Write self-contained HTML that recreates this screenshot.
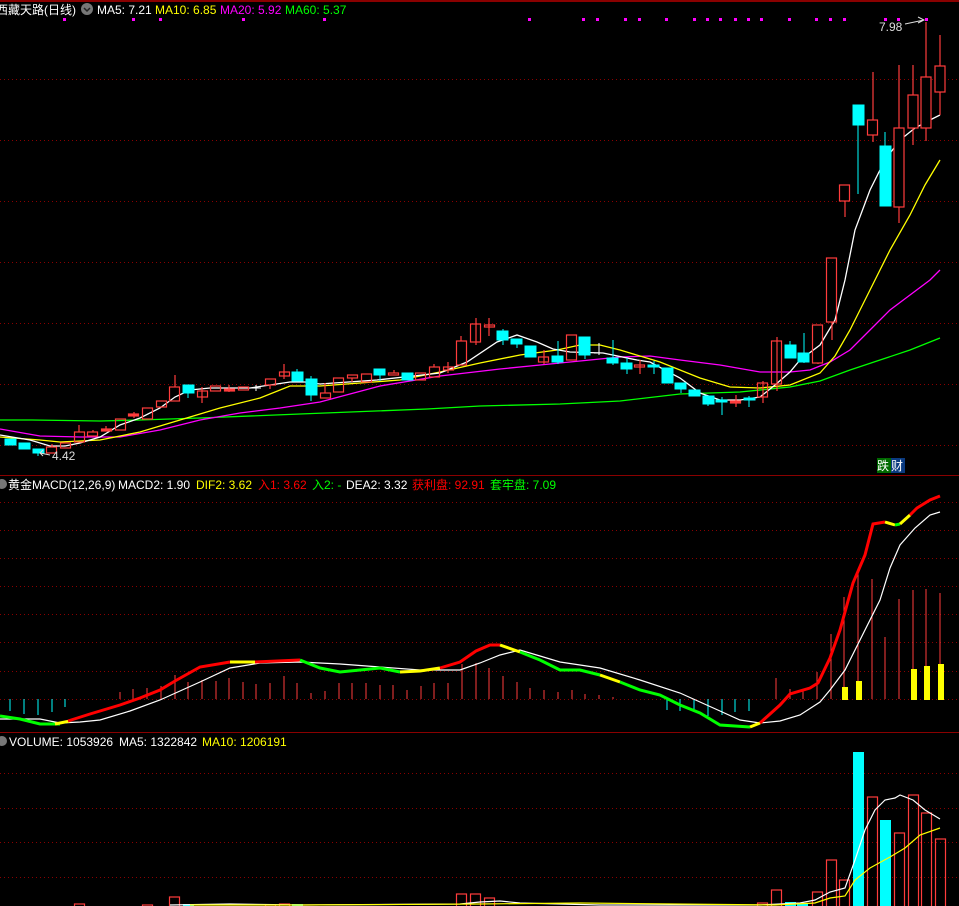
<!DOCTYPE html>
<html><head><meta charset="utf-8"><style>
html,body{margin:0;padding:0;background:#000;width:959px;height:906px;overflow:hidden}
svg{display:block}
text{font-family:"Liberation Sans","Noto Sans CJK SC",sans-serif;font-size:12px}
</style></head><body>
<svg width="959" height="906" viewBox="0 0 959 906" xmlns="http://www.w3.org/2000/svg">
<rect width="959" height="906" fill="#000"/>
<!-- separators -->
<line x1="0" y1="1" x2="959" y2="1" stroke="#8a0000" stroke-width="2"/>
<line x1="0" y1="475.5" x2="959" y2="475.5" stroke="#8a0000"/>
<line x1="0" y1="732.5" x2="959" y2="732.5" stroke="#8a0000"/>
<!-- grid -->
<g stroke="#8a0000" stroke-dasharray="1,3">
<line x1="0" y1="79.5" x2="959" y2="79.5"/><line x1="0" y1="140.5" x2="959" y2="140.5"/>
<line x1="0" y1="201.5" x2="959" y2="201.5"/><line x1="0" y1="262.5" x2="959" y2="262.5"/>
<line x1="0" y1="323.5" x2="959" y2="323.5"/><line x1="0" y1="384.5" x2="959" y2="384.5"/>
<line x1="0" y1="445.5" x2="959" y2="445.5"/>
<line x1="0" y1="502.5" x2="959" y2="502.5"/><line x1="0" y1="530.5" x2="959" y2="530.5"/>
<line x1="0" y1="558.5" x2="959" y2="558.5"/><line x1="0" y1="586.5" x2="959" y2="586.5"/>
<line x1="0" y1="614.5" x2="959" y2="614.5"/><line x1="0" y1="642.5" x2="959" y2="642.5"/>
<line x1="0" y1="671.5" x2="959" y2="671.5"/><line x1="0" y1="699.5" x2="959" y2="699.5"/>
<line x1="0" y1="773.5" x2="959" y2="773.5"/><line x1="0" y1="808.5" x2="959" y2="808.5"/>
<line x1="0" y1="842.5" x2="959" y2="842.5"/><line x1="0" y1="877.5" x2="959" y2="877.5"/>
</g>
<!-- header -->
<text x="-4" y="14" fill="#fff">西藏天路(日线)</text>
<circle cx="87" cy="9" r="6" fill="#777"/><path d="M84 8l3 3 3-3" stroke="#222" fill="none" stroke-width="1.5"/>
<text x="97" y="14" fill="#fff">MA5: 7.21</text>
<text x="155" y="14" fill="#ff0">MA10: 6.85</text>
<text x="220" y="14" fill="#f0f">MA20: 5.92</text>
<text x="285" y="14" fill="#0f0">MA60: 5.37</text>
<g fill="#f0f">
<rect x="63" y="18" width="3" height="3"/><rect x="132" y="18" width="3" height="3"/><rect x="159" y="18" width="3" height="3"/><rect x="242" y="18" width="3" height="3"/><rect x="323" y="18" width="3" height="3"/><rect x="528" y="18" width="3" height="3"/><rect x="582" y="18" width="3" height="3"/><rect x="596" y="18" width="3" height="3"/><rect x="624" y="18" width="3" height="3"/><rect x="638" y="18" width="3" height="3"/><rect x="665" y="18" width="3" height="3"/><rect x="693" y="18" width="3" height="3"/><rect x="706" y="18" width="3" height="3"/><rect x="719" y="18" width="3" height="3"/><rect x="734" y="18" width="3" height="3"/><rect x="747" y="18" width="3" height="3"/><rect x="760" y="18" width="3" height="3"/><rect x="788" y="18" width="3" height="3"/><rect x="815" y="18" width="3" height="3"/><rect x="829" y="18" width="3" height="3"/><rect x="843" y="18" width="3" height="3"/><rect x="884" y="18" width="3" height="3"/><rect x="897" y="18" width="3" height="3"/><rect x="925" y="18" width="3" height="3"/>
</g>
<!-- MA lines -->
<polyline fill="none" stroke="#0f0" stroke-width="1.3" points="0,420 32,420 100,421 140,420 200,418 300,414 427,409 480,406 560,404 620,401 680,394 740,392 790,387 820,381 850,370 880,360 910,350 940,338"/>
<polyline fill="none" stroke="#f0f" stroke-width="1.3" points="0,429 40,436 80,437 120,437 160,430 200,420 240,413 280,408 320,402 380,386 440,376 500,369 540,365 580,361 620,357 650,356 680,360 720,365 760,372 790,372 810,370 830,362 850,350 870,330 890,310 910,295 930,280 940,270"/>
<polyline fill="none" stroke="#ff0" stroke-width="1.3" points="0,437 40,440 60,442 100,440 140,432 180,420 220,408 260,398 290,386 320,386 400,380 440,372 480,363 520,355 557,350 580,345 600,345 620,350 640,356 660,362 700,378 730,387 760,388 790,385 820,373 835,356 850,330 870,290 890,250 910,215 925,185 940,160"/>
<polyline fill="none" stroke="#fff" stroke-width="1.3" points="0,435 30,440 50,446 65,446 80,443 100,437 120,425 140,418 160,408 175,397 190,390 210,388 250,388 270,385 290,382 305,382 320,384 377,380 440,373 467,362 497,342 517,335 537,342 553,349 570,352 603,353 637,360 650,362 680,378 700,393 720,400 740,400 760,397 775,385 790,372 800,360 820,345 835,320 845,280 855,230 870,190 885,160 900,140 915,128 930,120 940,115"/>
<!-- candles -->
<g stroke="#ff3c3c" fill="none" stroke-width="1.2">
<line x1="52" y1="444" x2="52" y2="447"/><rect x="46.5" y="447" width="10" height="6"/>
<rect x="60.5" y="443" width="10" height="5"/>
<line x1="79" y1="425" x2="79" y2="432"/><rect x="74.5" y="432" width="10" height="10"/>
<line x1="93" y1="430" x2="93" y2="432"/><rect x="87.5" y="432" width="10" height="4"/>
<line x1="106" y1="426" x2="106" y2="430"/><rect x="101.5" y="429" width="10" height="2" fill="#ff3c3c"/>
<rect x="115.5" y="419" width="10" height="11"/>
<line x1="134" y1="412" x2="134" y2="418"/><rect x="128.5" y="414" width="10" height="2" fill="#ff3c3c"/>
<rect x="142.5" y="408" width="10" height="11"/>
<rect x="156.5" y="401" width="10" height="6"/>
<line x1="175" y1="375" x2="175" y2="387"/><rect x="169.5" y="387" width="10" height="14"/>
<line x1="202" y1="387" x2="202" y2="403"/><rect x="197.5" y="391" width="10" height="6"/>
<rect x="210.5" y="386" width="10" height="5"/>
<line x1="229" y1="385" x2="229" y2="392"/><rect x="224.5" y="389" width="10" height="2" fill="#ff3c3c"/>
<rect x="238.5" y="387" width="10" height="3"/>
<rect x="265.5" y="379" width="10" height="6"/><line x1="270" y1="385" x2="270" y2="389"/>
<line x1="284" y1="364" x2="284" y2="379"/><rect x="279.5" y="372" width="10" height="4"/>
<line x1="325" y1="383" x2="325" y2="393"/><rect x="320.5" y="393" width="10" height="5"/>
<rect x="333.5" y="378" width="10" height="14"/>
<rect x="347.5" y="375" width="10" height="3"/><line x1="352" y1="378" x2="352" y2="382"/>
<rect x="361.5" y="374" width="10" height="8"/>
<line x1="394" y1="370" x2="394" y2="373"/><rect x="388.5" y="373" width="10" height="2"/>
<rect x="415.5" y="373" width="10" height="7"/>
<line x1="434" y1="364" x2="434" y2="367"/><rect x="429.5" y="367" width="10" height="10"/>
<line x1="448" y1="362" x2="448" y2="373"/><rect x="443.5" y="367" width="10" height="3"/>
<line x1="461" y1="336" x2="461" y2="341"/><rect x="456.5" y="341" width="10" height="24"/>
<line x1="476" y1="318" x2="476" y2="345"/><rect x="470.5" y="324" width="10" height="18"/>
<line x1="489" y1="318" x2="489" y2="336"/><rect x="484.5" y="325" width="10" height="2"/>
<line x1="544" y1="350" x2="544" y2="364"/><rect x="538.5" y="357" width="10" height="5"/>
<rect x="566.5" y="335" width="10" height="25"/>
<line x1="640" y1="360" x2="640" y2="374"/><rect x="634.5" y="365" width="10" height="2"/>
<line x1="736" y1="395" x2="736" y2="407"/><rect x="730.5" y="401" width="10" height="2" fill="#ff3c3c"/>
<line x1="763" y1="381" x2="763" y2="403"/><rect x="757.5" y="383" width="10" height="14"/>
<line x1="777" y1="337" x2="777" y2="391"/><rect x="771.5" y="341" width="10" height="43"/>
<line x1="818" y1="363" x2="818" y2="364"/><rect x="812.5" y="325" width="10" height="38"/>
<line x1="832" y1="322" x2="832" y2="340"/><rect x="826.5" y="258" width="10" height="64"/>
<line x1="845" y1="201" x2="845" y2="217"/><rect x="839.5" y="185" width="10" height="16"/>
<line x1="873" y1="72" x2="873" y2="142"/><rect x="867.5" y="120" width="10" height="15" fill="#000"/>
<line x1="899" y1="65" x2="899" y2="223"/><rect x="894" y="128" width="10" height="79" fill="#000"/>
<line x1="913" y1="65" x2="913" y2="145"/><rect x="908" y="95" width="10" height="33" fill="#000"/>
<line x1="926" y1="22" x2="926" y2="141"/><rect x="921" y="77" width="10" height="51" fill="#000"/>
<line x1="940" y1="35" x2="940" y2="115"/><rect x="935" y="66" width="10" height="26" fill="#000"/>
</g>
<g fill="#0ff" stroke="#0ff">
<rect x="5" y="439" width="11" height="6"/><rect x="19" y="443" width="11" height="6"/>
<rect x="33" y="449" width="11" height="4"/><line x1="38" y1="453" x2="38" y2="456"/>
<rect x="183" y="385" width="11" height="8"/><line x1="188" y1="393" x2="188" y2="398"/>
<rect x="292" y="372" width="11" height="9"/><line x1="297" y1="369" x2="297" y2="372"/>
<rect x="306" y="379" width="11" height="16"/><line x1="311" y1="376" x2="311" y2="401"/>
<rect x="374" y="369" width="11" height="6"/><line x1="380" y1="375" x2="380" y2="381"/>
<rect x="402" y="373" width="11" height="7"/>
<rect x="497" y="331" width="11" height="9"/><line x1="503" y1="329" x2="503" y2="345"/>
<rect x="511" y="339" width="11" height="5"/><line x1="517" y1="344" x2="517" y2="348"/>
<rect x="525" y="346" width="11" height="11"/>
<rect x="552" y="356" width="11" height="6"/><line x1="558" y1="341" x2="558" y2="364"/>
<rect x="579" y="337" width="11" height="18"/><line x1="585" y1="355" x2="585" y2="359"/>
<rect x="607" y="358" width="11" height="5"/><line x1="613" y1="340" x2="613" y2="365"/>
<rect x="621" y="363" width="11" height="6"/><line x1="627" y1="358" x2="627" y2="374"/>
<rect x="648" y="365" width="11" height="2"/><line x1="654" y1="361" x2="654" y2="374"/>
<rect x="662" y="368" width="11" height="15"/>
<rect x="675" y="383" width="11" height="6"/><line x1="681" y1="389" x2="681" y2="393"/>
<rect x="689" y="390" width="11" height="6"/>
<rect x="703" y="396" width="11" height="8"/><line x1="708" y1="404" x2="708" y2="406"/>
<rect x="716" y="400" width="11" height="2"/><line x1="722" y1="397" x2="722" y2="415"/>
<rect x="744" y="398" width="11" height="2"/><line x1="749" y1="396" x2="749" y2="407"/>
<rect x="785" y="345" width="11" height="13"/><line x1="790" y1="341" x2="790" y2="345"/>
<rect x="798" y="353" width="11" height="9"/><line x1="804" y1="333" x2="804" y2="363"/>
<rect x="853" y="105" width="11" height="20"/><line x1="858" y1="125" x2="858" y2="194"/>
<rect x="880" y="146" width="11" height="60"/><line x1="885" y1="132" x2="885" y2="146"/>
</g>
<g stroke="#fff"><line x1="251" y1="388" x2="261" y2="388"/><line x1="256" y1="385" x2="256" y2="391"/>
<line x1="594" y1="353" x2="604" y2="353"/><line x1="599" y1="343" x2="599" y2="355"/></g>
<text x="879" y="31" fill="#ddd">7.98</text>
<path d="M905 24 L924 20 M918 17 L924 20 L918 23" stroke="#ddd" fill="none"/>
<text x="52" y="460" fill="#ddd">4.42</text>
<path d="M50 455 L40 453 M43 450 L40 453 L43 456" stroke="#ddd" fill="none"/>
<rect x="877" y="458" width="14" height="15" fill="#006a00"/><rect x="891" y="458" width="14" height="15" fill="#0a3a80"/>
<text x="877" y="470" fill="#fff">跌</text><text x="891" y="470" fill="#fff">财</text>

<!-- MACD header -->
<circle cx="2" cy="484" r="5" fill="#777"/>
<text x="8" y="489" fill="#fff">黄金MACD(12,26,9)</text>
<text x="118" y="489" fill="#fff">MACD2: 1.90</text>
<text x="196" y="489" fill="#ff0">DIF2: 3.62</text>
<text x="258" y="489" fill="#f00">入1: 3.62</text>
<text x="312" y="489" fill="#0f0">入2: -</text>
<text x="346" y="489" fill="#fff">DEA2: 3.32</text>
<text x="412" y="489" fill="#f00">获利盘: 92.91</text>
<text x="490" y="489" fill="#0f0">套牢盘: 7.09</text>
<!-- MACD bars -->
<g stroke="#0ff">
<line x1="10" y1="699" x2="10" y2="711"/><line x1="24" y1="699" x2="24" y2="714"/><line x1="38" y1="699" x2="38" y2="715"/><line x1="52" y1="699" x2="52" y2="712"/><line x1="65" y1="699" x2="65" y2="707"/>
<line x1="667" y1="699" x2="667" y2="710"/><line x1="680" y1="699" x2="680" y2="711"/><line x1="694" y1="699" x2="694" y2="712"/><line x1="708" y1="699" x2="708" y2="716"/><line x1="722" y1="699" x2="722" y2="715"/><line x1="735" y1="699" x2="735" y2="712"/><line x1="749" y1="699" x2="749" y2="711"/>
</g>
<g stroke="#ff3c3c">
<line x1="120" y1="699" x2="120" y2="692"/><line x1="133" y1="699" x2="133" y2="689"/><line x1="147" y1="699" x2="147" y2="688"/><line x1="161" y1="699" x2="161" y2="686"/><line x1="175" y1="699" x2="175" y2="675"/><line x1="188" y1="699" x2="188" y2="682"/><line x1="202" y1="699" x2="202" y2="680"/><line x1="216" y1="699" x2="216" y2="681"/><line x1="229" y1="699" x2="229" y2="678"/><line x1="243" y1="699" x2="243" y2="682"/><line x1="256" y1="699" x2="256" y2="684"/><line x1="270" y1="699" x2="270" y2="683"/><line x1="284" y1="699" x2="284" y2="676"/><line x1="297" y1="699" x2="297" y2="683"/><line x1="311" y1="699" x2="311" y2="693"/><line x1="325" y1="699" x2="325" y2="691"/><line x1="339" y1="699" x2="339" y2="683"/><line x1="352" y1="699" x2="352" y2="683"/><line x1="366" y1="699" x2="366" y2="683"/><line x1="380" y1="699" x2="380" y2="685"/><line x1="393" y1="699" x2="393" y2="685"/><line x1="407" y1="699" x2="407" y2="690"/><line x1="421" y1="699" x2="421" y2="686"/><line x1="434" y1="699" x2="434" y2="683"/><line x1="448" y1="699" x2="448" y2="683"/><line x1="462" y1="699" x2="462" y2="664"/><line x1="476" y1="699" x2="476" y2="663"/><line x1="489" y1="699" x2="489" y2="668"/><line x1="503" y1="699" x2="503" y2="676"/><line x1="517" y1="699" x2="517" y2="682"/><line x1="530" y1="699" x2="530" y2="688"/><line x1="544" y1="699" x2="544" y2="690"/><line x1="558" y1="699" x2="558" y2="692"/><line x1="572" y1="699" x2="572" y2="690"/><line x1="585" y1="699" x2="585" y2="694"/><line x1="599" y1="699" x2="599" y2="695"/><line x1="613" y1="699" x2="613" y2="697"/>
<line x1="776" y1="699" x2="776" y2="678"/><line x1="790" y1="699" x2="790" y2="689"/><line x1="803" y1="699" x2="803" y2="690"/><line x1="817" y1="699" x2="817" y2="672"/><line x1="831" y1="699" x2="831" y2="634"/><line x1="844" y1="699" x2="844" y2="597"/><line x1="858" y1="699" x2="858" y2="571"/><line x1="872" y1="699" x2="872" y2="579"/><line x1="885" y1="699" x2="885" y2="637"/><line x1="899" y1="699" x2="899" y2="599"/><line x1="913" y1="699" x2="913" y2="590"/><line x1="926" y1="699" x2="926" y2="589"/><line x1="940" y1="699" x2="940" y2="593"/>
</g>
<g fill="#ff0">
<rect x="842" y="687" width="6" height="13"/><rect x="856" y="681" width="6" height="19"/><rect x="911" y="669" width="6" height="31"/><rect x="924" y="666" width="6" height="34"/><rect x="938" y="664" width="6" height="36"/>
</g>
<polyline fill="none" stroke="#fff" stroke-width="1.2" points="0,719 40,719 60,723 80,722 100,720 130,711 160,700 200,682 230,668 260,663 300,662 340,664 380,667 420,670 460,670 480,663 500,655 520,650 540,656 560,662 600,668 640,680 680,693 720,711 740,720 760,723 780,721 800,715 820,702 830,690 845,670 860,640 880,600 890,568 900,545 915,528 930,515 940,512"/>
<g fill="none" stroke-width="3">
<polyline stroke="#0f0" points="0,716 20,719 40,724 60,724"/>
<polyline stroke="#ff0" points="55,724 70,721"/>
<polyline stroke="#f00" points="68,721 90,714 120,705 140,698 160,690 175,681 200,667 230,662"/>
<polyline stroke="#ff0" points="230,662 255,662"/>
<polyline stroke="#f00" points="255,662 300,660"/>
<polyline stroke="#0f0" points="300,660 320,668 340,672 380,668 400,672"/>
<polyline stroke="#ff0" points="400,672 420,671 440,668"/>
<polyline stroke="#f00" points="440,668 460,662 476,651 490,645 500,645"/>
<polyline stroke="#ff0" points="500,645 520,652"/>
<polyline stroke="#0f0" points="520,652 540,660 560,670 580,670 600,675"/>
<polyline stroke="#ff0" points="600,675 620,682"/>
<polyline stroke="#0f0" points="620,682 640,690 660,695 680,705 700,713 720,725 750,727"/>
<polyline stroke="#ff0" points="750,727 760,723"/>
<polyline stroke="#f00" points="760,723 780,705 790,694 810,688 818,683 830,658 840,630 853,583 865,555 873,524 885,522"/>
<polyline stroke="#ff0" points="885,522 895,525"/>
<polyline stroke="#0f0" points="895,525 900,524"/>
<polyline stroke="#ff0" points="900,524 910,515"/>
<polyline stroke="#f00" points="910,515 917,508 930,500 940,496"/>
</g>
<!-- Volume header -->
<circle cx="2" cy="741" r="5" fill="#777"/>
<text x="9" y="746" fill="#fff">VOLUME: 1053926</text>
<text x="119" y="746" fill="#fff">MA5: 1322842</text>
<text x="202" y="746" fill="#ff0">MA10: 1206191</text>
<!-- volume bars -->
<g stroke="#ff3c3c" fill="none" stroke-width="1.2">
<rect x="74.5" y="904" width="10" height="4"/><rect x="142.5" y="905" width="10" height="4"/><rect x="169.5" y="897" width="10" height="12"/>
<rect x="265.5" y="905" width="10" height="4"/><rect x="279.5" y="904" width="10" height="4"/>
<rect x="456.5" y="894" width="10" height="14"/><rect x="470.5" y="894" width="10" height="14"/><rect x="484.5" y="898" width="10" height="10"/>
<rect x="757.5" y="903" width="10" height="6"/><rect x="771.5" y="890" width="10" height="18"/><rect x="812.5" y="892" width="10" height="16"/>
<rect x="826.5" y="860" width="10" height="48"/><rect x="839.5" y="880" width="10" height="28"/><rect x="867.5" y="797" width="10" height="111"/>
<rect x="894.5" y="833" width="10" height="75"/><rect x="908.5" y="795" width="10" height="113"/><rect x="921.5" y="813" width="10" height="95"/><rect x="935.5" y="839" width="10" height="69"/>
</g>
<g fill="#0ff">
<rect x="183" y="904" width="11" height="2"/><rect x="292" y="904" width="11" height="2"/><rect x="785" y="902" width="11" height="4"/><rect x="797" y="904" width="11" height="2"/>
<rect x="853" y="752" width="11" height="154"/><rect x="880" y="820" width="11" height="86"/>
</g>
<polyline fill="none" stroke="#fff" stroke-width="1.2" points="170,905 230,904 300,905 460,904 480,902 500,901 520,903 600,905 760,905 780,904 800,903 815,900 830,892 845,888 855,860 865,830 875,810 885,800 895,798 900,795 913,800 925,810 940,819"/>
<polyline fill="none" stroke="#ff0" stroke-width="1.2" points="190,905 300,905 480,904 580,903 775,905 815,903 830,898 845,896 855,880 870,868 890,857 905,848 920,835 940,828"/>
</svg>
</body></html>
